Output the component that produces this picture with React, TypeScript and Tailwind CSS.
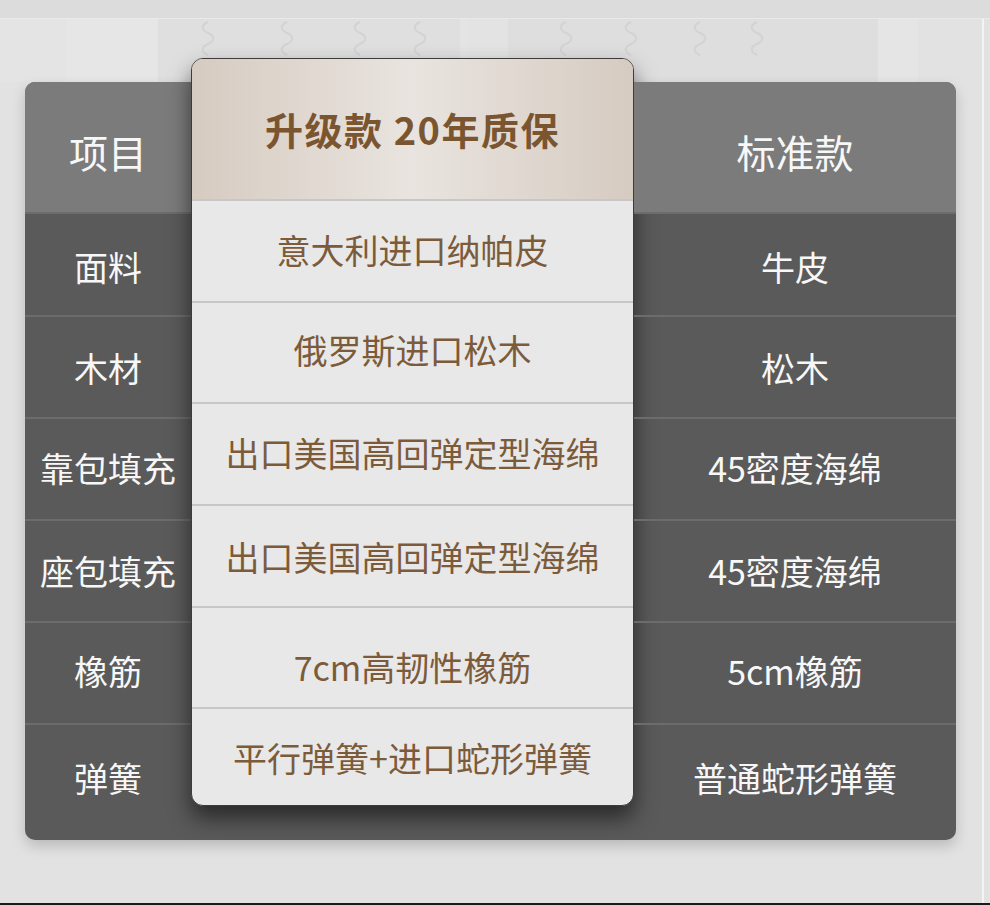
const rows = [
  { name: '面料', up: '意大利进口纳帕皮', std: '牛皮' },
  { name: '木材', up: '俄罗斯进口松木', std: '松木' },
  { name: '靠包填充', up: '出口美国高回弹定型海绵', std: '45密度海绵' },
  { name: '座包填充', up: '出口美国高回弹定型海绵', std: '45密度海绵' },
  { name: '橡筋', up: '7cm高韧性橡筋', std: '5cm橡筋' },
  { name: '弹簧', up: '平行弹簧+进口蛇形弹簧', std: '普通蛇形弹簧' },
]

// side rows line up with the dark table, card rows are shifted up a little
const sideHeights = [
  'h-[103px] pt-[4px]',
  'h-[102px]',
  'h-[102px] pb-[4px]',
  'h-[102px] pb-[2px]',
  'h-[102px] pb-[6px]',
  'h-[117px] pb-[11px]',
]
const cardHeights = ['h-[102px] pb-[2px]', 'h-[101px] pb-[6px]', 'h-[103px] pb-[2px]', 'h-[102px]', 'h-[101px] pt-[18px]', 'h-[98px]']

const springX = [208, 287, 360, 420, 566, 631, 700, 757]

function SideColumn({ title, values, rounded }: { title: string; values: string[]; rounded: string }) {
  return (
    <div className="flex flex-col">
      <div className={`h-[130px] bg-[#7b7b7b] flex items-center justify-center pt-[8px] text-[39px] text-[#f7f7f7] ${rounded}`}>
        {title}
      </div>
      {values.map((v, i) => (
        <div
          key={i}
          className={`${sideHeights[i]} border-t-2 border-[#6c6c6c] flex items-center justify-center text-[34px] text-[#f7f7f7]`}
        >
          {v}
        </div>
      ))}
    </div>
  )
}

export default function App() {
  return (
    <div className="w-[990px] h-[905px] bg-[#e2e2e2] flex flex-col overflow-hidden font-['Noto_Sans_CJK_SC','Noto_Sans',sans-serif]">
      <div className="h-[19px] bg-[#dcdcdc] border-b border-[#e9e9e9]" />

      <div className="flex-1 flex">
        <div className="w-[982px] flex flex-col">
          {/* faint photo strip behind the table top */}
          <div className="h-[63px] flex bg-[#e2e2e2]">
            <div className="w-[66px] bg-[#e4e4e4]" />
            <div className="w-[92px] bg-[#e6e6e6]" />
            <div className="w-[310px] bg-[#dfdfdf] border-r-8 border-[#e4e4e4]" />
            <div className="w-[40px] bg-[#e3e3e3]" />
            <div className="w-[370px] bg-[#dedede]" />
            <div className="w-[40px] bg-[#e5e5e5]" />
            <div className="flex-1 bg-[#e2e2e2]" />
          </div>
          <svg className="-mt-[63px] h-[63px] w-[982px]" viewBox="0 0 982 63">
            {springX.map((x) => (
              <path
                key={x}
                d={`M${x} 3 c-7 3 -7 8 0 11 c7 3 7 8 0 11 c-7 3 -7 8 0 11`}
                fill="none"
                stroke="#d3d3d3"
                strokeWidth="2"
              />
            ))}
          </svg>

          <div className="ml-[25px] w-[931px] h-[758px] flex rounded-[10px] bg-[#5a5a5a] shadow-[0_6px_14px_rgba(0,0,0,0.18)]">
            <div className="w-[166px]">
              <SideColumn title="项目" values={rows.map((r) => r.name)} rounded="rounded-tl-[10px]" />
            </div>

            <div className="w-[443px]">
              <div className="-mt-[24px] h-[748px] flex flex-col rounded-[12px] border border-[#3c3c3c] overflow-hidden bg-[#e8e8e8] shadow-[0_12px_22px_rgba(0,0,0,0.55)]">
                <div className="h-[140px] flex items-center justify-center bg-[linear-gradient(90deg,#d6cbc1_0%,#e9e4df_50%,#d6cbc1_100%)] text-[38px] font-bold tracking-[1.5px] text-[#7a5530]">
                  升级款 20年质保
                </div>
                {rows.map((r, i) => (
                  <div
                    key={r.name}
                    className={`${cardHeights[i]} border-t-2 border-[#c7c7c7] flex items-center justify-center text-[34px] text-[#7c5b3b]`}
                  >
                    {r.up}
                  </div>
                ))}
              </div>
            </div>

            <div className="flex-1">
              <SideColumn title="标准款" values={rows.map((r) => r.std)} rounded="rounded-tr-[10px]" />
            </div>
          </div>
        </div>
        <div className="w-[2px] bg-[#f3f3f3]" />
        <div className="flex-1 bg-[#e2e2e2]" />
      </div>

      <div className="h-[2px] bg-[#1a1a1a]" />
    </div>
  )
}
